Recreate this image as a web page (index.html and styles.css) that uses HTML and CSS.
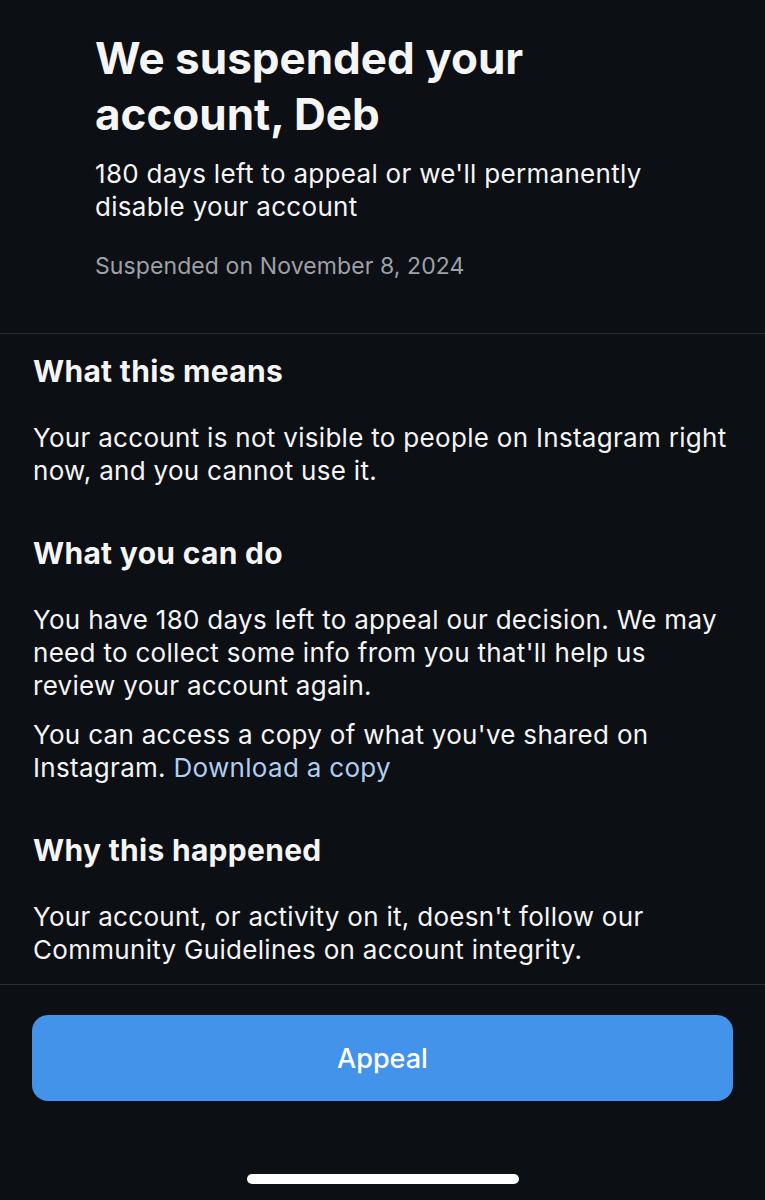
FILE: index.html
```html
<!DOCTYPE html>
<html lang="en">
<head>
    <meta charset="UTF-8">
    <meta name="viewport" content="width=device-width, initial-scale=1.0">
    <title>Account suspended</title>
    <link rel="stylesheet" href="styles.css">
</head>
<body>
    <div class="screen">
        <div class="intro">
            <h1>We suspended your account, Deb</h1>
            <p class="lead">180 days left to appeal or we'll permanently disable your account</p>
            <p class="date">Suspended on November 8, 2024</p>
        </div>

        <div class="details">
            <h2>What this means</h2>
            <p>Your account is not visible to people on Instagram right now, and you cannot use it.</p>

            <h2>What you can do</h2>
            <p class="tight">You have 180 days left to appeal our decision. We may need to collect some info from you that'll help us review your account again.</p>
            <p>You can access a copy of what you've shared on Instagram. <a href="#">Download a copy</a></p>

            <h2>Why this happened</h2>
            <p>Your account, or activity on it, doesn't follow our Community Guidelines on account integrity.</p>
        </div>

        <div class="actions">
            <button type="button">Appeal</button>
        </div>

        <div class="home-bar"></div>
    </div>
</body>
</html>
```

FILE: styles.css
```css
body {
    margin: 0;
    background-color: #0c0f14;
    color: #f5f5f5;
    font-family: Inter, "Noto Sans", sans-serif;
}
.screen {
    width: 765px;
    height: 1200px;
    display: flex;
    flex-direction: column;
}
.intro {
    padding: 30px 95px 52px 95px;
    border-bottom: 1px solid #2a2d33;
}
h1 {
    margin: 0;
    font-size: 44px;
    line-height: 56px;
    font-weight: 700;
}
.lead {
    margin: 15px 0 0 0;
    font-size: 26px;
    line-height: 33px;
    letter-spacing: 0.3px;
}
.date {
    margin: 28px 0 0 0;
    font-size: 23px;
    line-height: 30px;
    letter-spacing: 0.1px;
    color: #9da1a8;
}
.details {
    padding: 20px 33px 18px 33px;
    border-bottom: 1px solid #2a2d33;
}
h2 {
    margin: 0 0 33px 0;
    font-size: 30px;
    line-height: 34px;
    font-weight: 700;
    letter-spacing: 0.3px;
}
.details p {
    margin: 0 0 49px 0;
    font-size: 26px;
    line-height: 33px;
    letter-spacing: 0.3px;
}
.details p.tight {
    margin-bottom: 16px;
}
.details p:last-child {
    margin-bottom: 0;
}
a {
    color: #b0cdf2;
    text-decoration: none;
}
.actions {
    padding: 30px 32px 0 32px;
}
button {
    width: 100%;
    height: 86px;
    border: none;
    border-radius: 16px;
    background-color: #4493ea;
    color: #fff;
    font-family: Inter, "Noto Sans", sans-serif;
    font-size: 27px;
    font-weight: 500;
    cursor: pointer;
}
.home-bar {
    width: 272px;
    height: 10px;
    margin: 73px auto 0 auto;
    border-radius: 5px;
    background-color: #fff;
}
```
